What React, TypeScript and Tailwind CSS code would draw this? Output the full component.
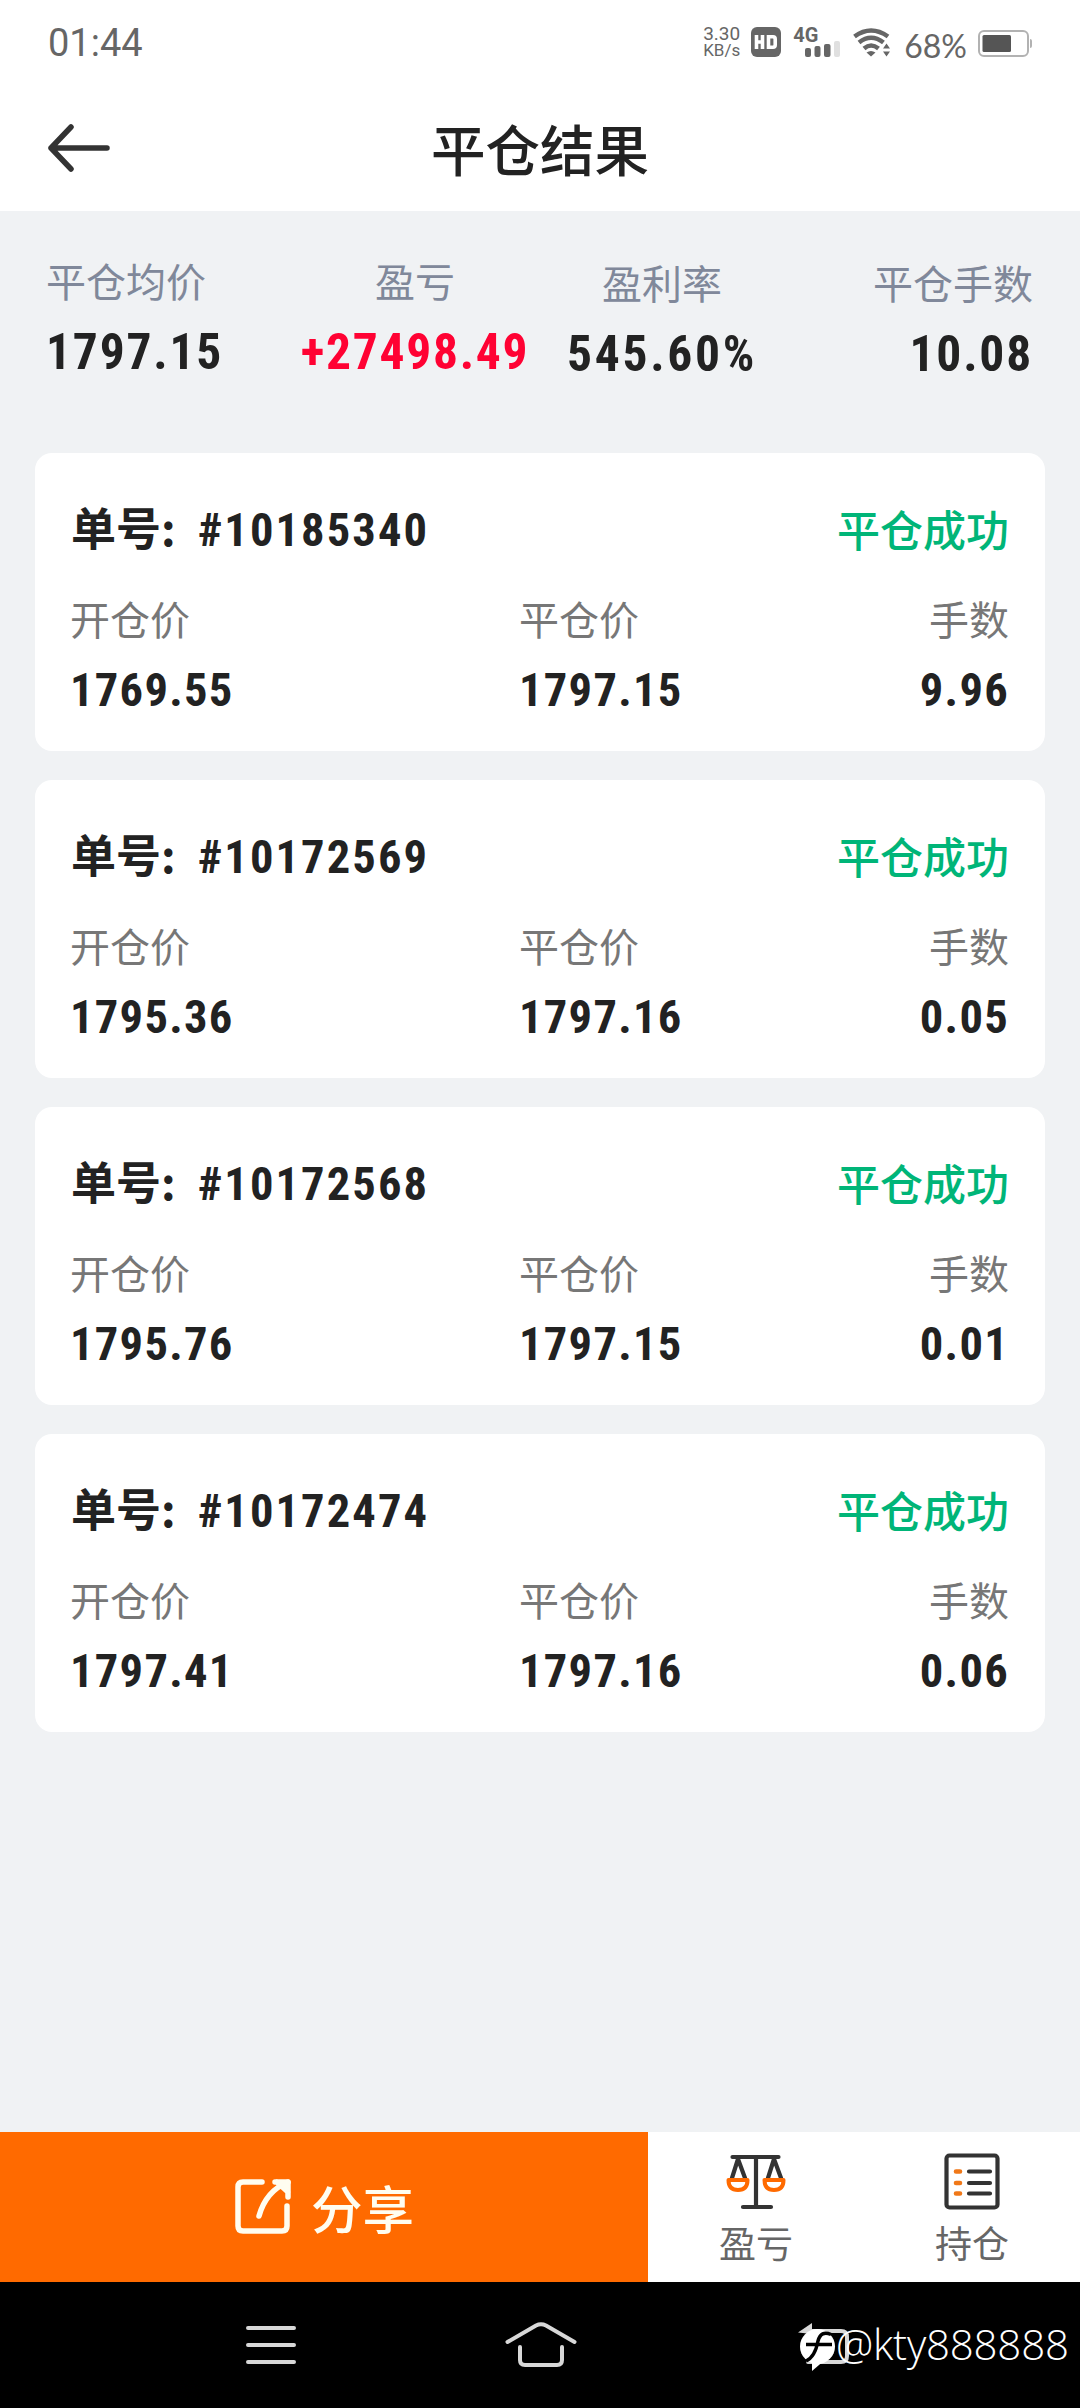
import React from "react";

const CJK = "font-['Noto_Sans_CJK_SC',sans-serif]";
const NUM = "font-['Roboto','Noto_Sans_CJK_SC',sans-serif] font-bold [font-stretch:75%]";

const orders = [
  { id: "10185340", open: "1769.55", close: "1797.15", lots: "9.96" },
  { id: "10172569", open: "1795.36", close: "1797.16", lots: "0.05" },
  { id: "10172568", open: "1795.76", close: "1797.15", lots: "0.01" },
  { id: "10172474", open: "1797.41", close: "1797.16", lots: "0.06" },
];

function StatusBar() {
  return (
    <div className="h-[84px] flex items-start justify-between pl-12 pr-[48px] text-[#666]">
      <span className="font-['Roboto',sans-serif] text-[38px] leading-[44px] mt-[21px]">01:44</span>
      <div className="flex items-start mt-[26px] h-[34px]">
        <div className="font-['Roboto',sans-serif] text-[19px] leading-[16px] text-center">
          <div>3.30</div>
          <div className="text-[17px] leading-[17px]">KB/s</div>
        </div>
        <svg className="w-[30px] h-[30px] ml-[11px] mt-px" viewBox="0 0 30 30">
          <rect width="30" height="30" rx="6" fill="#666" />
          <path d="M5.500 8v14M5.500 15h6M11.500 8v14M17.500 9.800h4.500q2.200 0 2.200 2.200v6q0 2.200-2.200 2.200h-4.500z" fill="none" stroke="#fff" strokeWidth="3.600" />
        </svg>
        <div className="relative w-[48px] h-[31px] ml-[12px]">
          <span className="absolute left-0 -top-px font-['Roboto',sans-serif] font-bold text-[20px] leading-[20px]">4G</span>
          <svg className="absolute left-[12px] top-[14px] w-[36px] h-[17px]" viewBox="0 0 36 17">
            <rect x="0" y="8" width="6" height="9" rx="2" fill="#666" />
            <rect x="9.500" y="6" width="6" height="11" rx="2" fill="#666" />
            <rect x="19" y="4" width="6.500" height="13" rx="2" fill="#666" />
            <rect x="29" y="1" width="6" height="16" rx="2" fill="#e0e0e0" />
          </svg>
        </div>
        <svg className="w-[37px] h-[30px] ml-[12px] mt-[2px]" viewBox="0 0 37 30">
          <g fill="none" stroke="#666" strokeWidth="4.500">
            <path d="M1.500 8.500Q18 -3.500 35 8.500" />
            <path d="M6 14.500Q18 5 30.500 14.500" />
            <path d="M11 20.500Q18 14.500 25.500 20.500" />
          </g>
          <path d="M13.500 24.500Q18 21.500 22.500 24.500L18 28.500z" fill="#666" />
          <path d="M28.500 22v-5l5-5H37v16h-8.500z" fill="#fff" />
          <path d="M30 20.500l3.500-5 3.500 5zM30 23.500h7l-3.500 5z" fill="#666" />
        </svg>
        <span className="font-['Lato',sans-serif] text-[32px] leading-[36px] ml-[14px] mt-[2px]">68%</span>
        <svg className="w-[54px] h-[27px] ml-[11px] mt-1" viewBox="0 0 54 27">
          <rect x="1" y="1" width="49" height="25" rx="5" fill="none" stroke="#b2b2b2" strokeWidth="2" />
          <rect x="4.500" y="5" width="28.500" height="17" rx="1.500" fill="#555" />
          <path d="M52 9q2 0 2 2v5q0 2-2 2z" fill="#b2b2b2" />
        </svg>
      </div>
    </div>
  );
}

function Header() {
  return (
    <div className="h-[127px] grid grid-cols-3 items-center px-12">
      <svg className="w-[62px] h-[48px]" viewBox="0 0 62 48" fill="none" stroke="#333" strokeWidth="5.500" strokeLinecap="round" strokeLinejoin="round">
        <path d="M23 3L3 24l20 21M3 24h56" />
      </svg>
      <h1 className={`${CJK} text-[54.5px] leading-[54px] font-medium text-center text-[#222]`}>平仓结果</h1>
    </div>
  );
}

type StatProps = {
  label: string;
  value: string;
  className: string;
  valueClassName?: string;
};

function Stat({ label, value, className, valueClassName = "tracking-[1.800px] text-[#222]" }: StatProps) {
  return (
    <div className={`flex flex-col ${className}`}>
      <span className={`${CJK} text-[40px] leading-[48px] text-[#80889a]`}>{label}</span>
      <span className={`${NUM} text-[49.5px] leading-[56px] mt-[20px] ${valueClassName}`}>{value}</span>
    </div>
  );
}

function Summary() {
  return (
    <div className="h-[242px] flex pl-[46px] pr-[47px] pt-[45px]">
      <Stat label="平仓均价" value="1797.15" className="w-[220px]" />
      <Stat label="盈亏" value="+27498.49" className="w-[298px] items-center" valueClassName="tracking-[1.700px] text-[#ff0233]" />
      <Stat label="盈利率" value="545.60%" className="w-[196px] items-center mt-[2px]" valueClassName="tracking-[2.700px] text-[#222]" />
      <Stat label="平仓手数" value="10.08" className="flex-1 items-end mt-[2px]" />
    </div>
  );
}

function Field({ label, value, className = "" }: { label: string; value: string; className?: string }) {
  return (
    <div className={`flex flex-col ${className}`}>
      <span className={`${CJK} text-[40px] leading-[48px] text-[#777]`}>{label}</span>
      <span className={`${NUM} text-[46.5px] leading-[54px] tracking-[1.300px] text-[#222] mt-[21px]`}>{value}</span>
    </div>
  );
}

function OrderCard({ order }: { order: (typeof orders)[number] }) {
  return (
    <div className="h-[298px] rounded-[17px] bg-white px-[36px] pt-[47px]">
      <div className="flex items-center justify-between h-[54px]">
        <div className="flex items-center text-[#222]">
          <span className={`${CJK} text-[45px] leading-[54px] font-bold`}>单号:</span>
          <span className={`${NUM} text-[46.5px] leading-[54px] tracking-[2.100px] ml-[22px] mt-[6px]`}>#{order.id}</span>
        </div>
        <span className={`${CJK} text-[43px] leading-[54px] font-medium text-[#00b578] mt-px`}>平仓成功</span>
      </div>
      <div className="flex mt-[40px] -ml-px">
        <Field label="开仓价" value={order.open} className="w-[449px]" />
        <Field label="平仓价" value={order.close} className="flex-1" />
        <Field label="手数" value={order.lots} className="items-end" />
      </div>
    </div>
  );
}

function ActionBar() {
  return (
    <div className="h-[150px] flex">
      <button className="w-[648px] bg-[#ff6a00] flex items-center justify-center text-[#fffdf0]">
        <svg className="w-[58px] h-[58px]" viewBox="0 0 58 58" fill="none" stroke="#fffdf0" strokeWidth="5.500" strokeLinecap="round" strokeLinejoin="round">
          <path d="M28 4H9Q4 4 4 9v39q0 5 5 5h39q5 0 5-5V28" />
          <path d="M41 4h13v15M43 4l11 10" />
          <path d="M54 4Q32 13 25 38" />
        </svg>
        <span className={`${CJK} text-[51.5px] leading-[60px] font-medium ml-[19px]`}>分享</span>
      </button>
      <div className="flex-1 bg-white flex">
        <button className="flex-1 flex flex-col items-center pt-[20px]">
          <svg className="w-[60px] h-[58px]" viewBox="0 0 60 58" fill="none" strokeLinecap="round" strokeLinejoin="round">
            <g stroke="#333" strokeWidth="4.200">
              <path d="M6.500 5h46M30 5v50M17 55h28" />
              <path d="M6 26l6-19 7 19M42 26l6-19 7 19" />
            </g>
            <g stroke="#ff6a00" strokeWidth="4">
              <path d="M2.500 28h19q0 10-9.500 10t-9.500-10zM38.500 28h19q0 10-9.500 10t-9.500-10z" />
            </g>
          </svg>
          <span className={`${CJK} text-[37px] leading-[44px] text-[#666] mt-[10px]`}>盈亏</span>
        </button>
        <button className="flex-1 flex flex-col items-center pt-[20px]">
          <svg className="w-[58px] h-[58px]" viewBox="0 0 58 58" fill="none" strokeLinecap="round">
            <rect x="3.500" y="3.500" width="51" height="52" rx="3" stroke="#333" strokeWidth="4.200" />
            <path d="M26 19.500h21M26 31h21M26 41.500h21" stroke="#333" strokeWidth="4.200" />
            <path d="M13 19.500h4M13 31h4M13 41.500h4" stroke="#f07818" strokeWidth="4.600" />
          </svg>
          <span className={`${CJK} text-[37px] leading-[44px] text-[#666] mt-[10px]`}>持仓</span>
        </button>
      </div>
    </div>
  );
}

function NavBar() {
  return (
    <div className="relative h-[126px] bg-black flex items-start">
      <svg className="w-[50px] h-[38px] ml-[246px] mt-[44px]" viewBox="0 0 50 38" stroke="#d8d8d8" strokeWidth="4" strokeLinecap="round">
        <path d="M2 2h46M2 19h46M2 36h46" />
      </svg>
      <svg className="w-[72px] h-[46px] ml-[209px] mt-[40px]" viewBox="0 0 72 46" fill="none" stroke="#d8d8d8" strokeWidth="4" strokeLinecap="round">
        <path d="M2.500 20L31 3.500q5-2.500 10 0L69.500 20" />
        <path d="M15 25v13q0 5 5 5h32q5 0 5-5V25" />
      </svg>
      <svg className="w-[54px] h-[46px] ml-[220px] mt-[40px]" viewBox="0 0 54 46" fill="none" stroke="#d8d8d8" strokeWidth="4" strokeLinecap="round">
        <path d="M10 9h34q6 0 6 6v19q0 6-6 6H11" />
        <path d="M1 10.500L15 1v11z" fill="#d8d8d8" stroke="none" />
      </svg>
      {/* Forum watermark laid over the back button */}
      <div className="absolute left-[800px] top-[34px] flex items-start">
        <svg className="w-[36px] h-[42px] mt-[13px]" viewBox="0 0 36 42">
          <ellipse cx="17.500" cy="17.500" rx="17.500" ry="17.500" fill="#fff" />
          <path d="M12 31v11l14-12z" fill="#fff" />
          <path d="M6 15.500h26M31 5.500Q21 1 18 12Q15 28 6 32" fill="none" stroke="#000" strokeWidth="3.500" />
        </svg>
        <span className="font-['Open_Sans',sans-serif] font-[350] [font-stretch:93%] tracking-[-0.200px] text-[42px] leading-[56px] text-white">@kty888888</span>
      </div>
    </div>
  );
}

export default function App() {
  return (
    <div className="w-[1080px] h-[2408px] flex flex-col bg-[#f0f2f4] overflow-hidden">
      <div className="bg-white">
        <StatusBar />
        <Header />
      </div>
      <Summary />
      <div className="flex-1 flex flex-col gap-[29px] px-[35px]">
        {orders.map((order) => (
          <OrderCard key={order.id} order={order} />
        ))}
      </div>
      <ActionBar />
      <NavBar />
    </div>
  );
}
